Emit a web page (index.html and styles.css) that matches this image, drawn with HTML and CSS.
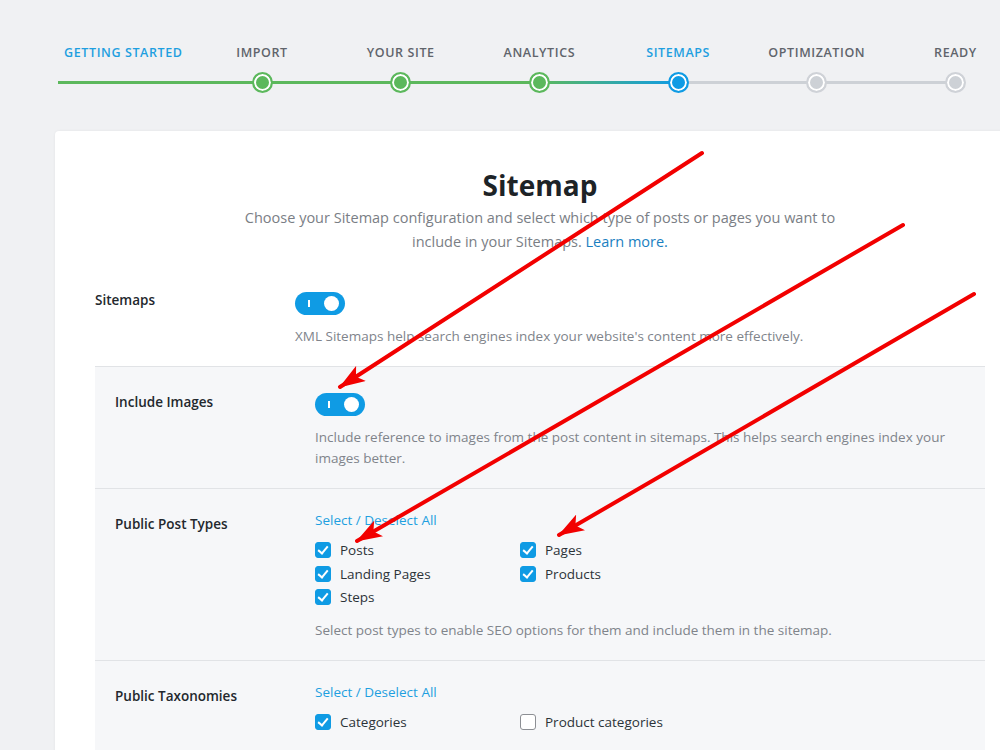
FILE: index.html
```html
<!DOCTYPE html>
<html lang="en">

<head>
  <meta charset="UTF-8">
  <meta name="viewport" content="width=device-width, initial-scale=1.0">
  <title>Setup Wizard - Sitemap</title>
  <link rel="stylesheet" href="styles.css">
</head>

<body>
  <div class="page">
    <ol class="steps">
      <li class="step first">
        <span class="step-label active">Getting Started</span>
        <span class="step-track"></span>
      </li>
      <li class="step done">
        <span class="step-label">Import</span>
        <span class="step-track"><i class="dot"></i></span>
      </li>
      <li class="step done">
        <span class="step-label">Your Site</span>
        <span class="step-track"><i class="dot"></i></span>
      </li>
      <li class="step done blend">
        <span class="step-label">Analytics</span>
        <span class="step-track"><i class="dot"></i></span>
      </li>
      <li class="step current">
        <span class="step-label active">Sitemaps</span>
        <span class="step-track"><i class="dot"></i></span>
      </li>
      <li class="step todo">
        <span class="step-label">Optimization</span>
        <span class="step-track"><i class="dot"></i></span>
      </li>
      <li class="step todo last">
        <span class="step-label">Ready</span>
        <span class="step-track"><i class="dot"></i></span>
      </li>
    </ol>

    <div class="card">
      <h1 class="card-title">Sitemap</h1>
      <p class="intro">Choose your Sitemap configuration and select which type of posts or pages you want to include in your Sitemaps. <a href="javascript:;">Learn more.</a></p>

      <div class="setting">
        <div class="setting-label">Sitemaps</div>
        <div class="setting-body">
          <span class="toggle"></span>
          <p class="desc">XML Sitemaps help search engines index your website's content more effectively.</p>
        </div>
      </div>

      <div class="sub">
        <div class="setting">
          <div class="setting-label">Include Images</div>
          <div class="setting-body">
            <span class="toggle"></span>
            <p class="desc">Include reference to images from the post content in sitemaps. This helps search engines index your images better.</p>
          </div>
        </div>

        <div class="setting">
          <div class="setting-label">Public Post Types</div>
          <div class="setting-body">
            <a class="select-all" href="javascript:;">Select / Deselect All</a>
            <ul class="checks">
              <li><span class="box checked"></span>Posts</li>
              <li><span class="box checked"></span>Pages</li>
              <li><span class="box checked"></span>Landing Pages</li>
              <li><span class="box checked"></span>Products</li>
              <li><span class="box checked"></span>Steps</li>
            </ul>
            <p class="desc">Select post types to enable SEO options for them and include them in the sitemap.</p>
          </div>
        </div>

        <div class="setting">
          <div class="setting-label">Public Taxonomies</div>
          <div class="setting-body">
            <a class="select-all" href="javascript:;">Select / Deselect All</a>
            <ul class="checks">
              <li><span class="box checked"></span>Categories</li>
              <li><span class="box"></span>Product categories</li>
            </ul>
            <p class="desc">Select taxonomies to enable SEO options for them and include them in the sitemap.</p>
          </div>
        </div>
      </div>
    </div>
  </div>

  <!-- annotation arrows drawn over the screenshot -->
  <svg class="arrows" width="1000" height="750" viewBox="0 0 1000 750">
    <defs>
      <marker id="head" viewBox="0 0 26 18" refX="25" refY="9" markerWidth="26" markerHeight="18" orient="auto" markerUnits="userSpaceOnUse">
        <path d="M0 0 L26 9 L0 18 L6 9 Z" fill="#f20000" />
      </marker>
    </defs>
    <line x1="702" y1="153" x2="340" y2="387" stroke="#f20000" stroke-width="4" stroke-linecap="round" marker-end="url(#head)" />
    <line x1="903" y1="225" x2="357" y2="541" stroke="#f20000" stroke-width="4" stroke-linecap="round" marker-end="url(#head)" />
    <line x1="974" y1="294" x2="559" y2="535" stroke="#f20000" stroke-width="4" stroke-linecap="round" marker-end="url(#head)" />
  </svg>
</body>

</html>
```

FILE: styles.css
```css
* {
  padding: 0;
  margin: 0;
  box-sizing: border-box;
  list-style: none;
}

html,
body {
  overflow: hidden;
}

body {
  background-color: #f0f1f3;
  font-family: "Open Sans", "Noto Sans", sans-serif;
  color: #23282d;
  position: relative;
  width: 1000px;
  height: 750px;
}

a {
  text-decoration: none;
}

.page {
  width: 970px;
  margin-left: 55px;
}

/* ---------- steps ---------- */

.steps {
  display: grid;
  grid-template-columns: repeat(7, 138.7px);
  margin-left: -1px;
  padding-top: 44px;
}

.step {
  display: flex;
  flex-direction: column;
  align-items: center;
}

.step-label {
  font-size: 12.5px;
  font-weight: 600;
  letter-spacing: 0.6px;
  text-transform: uppercase;
  color: #60646b;
  line-height: 18px;
  white-space: nowrap;
}

.step-label.active {
  color: #1e9fe0;
}

.step-track {
  position: relative;
  width: 100%;
  height: 22px;
  margin-top: 9px;
  display: flex;
  justify-content: center;
  align-items: center;
}

.step-track::before {
  content: "";
  position: absolute;
  left: 0;
  right: 0;
  top: 10px;
  height: 3px;
  background: #5cb85c;
}

.step.first .step-track::before {
  left: 4px;
}

.step.blend .step-track::before {
  background: linear-gradient(90deg, #5cb85c 50%, #36aaa2 100%);
}

.step.current .step-track::before {
  background: linear-gradient(90deg, #36aaa2 0, #0f9be4 50%, #cdd1d6 50%);
}

.step.todo .step-track::before {
  background: #cdd1d6;
}

.step.last .step-track::before {
  right: 50%;
}

.dot {
  position: relative;
  width: 21px;
  height: 21px;
  border-radius: 50%;
  border: 2px solid #5cb85c;
  background: #5cb85c;
  box-shadow: inset 0 0 0 2px #fff;
}

.step.current .dot {
  border-color: #0f9be4;
  background: #0f9be4;
}

.step.todo .dot {
  border-color: #cfd2d7;
  background: #cdd1d6;
}

/* ---------- card ---------- */

.card {
  margin-top: 38px;
  background: #fff;
  border-radius: 4px;
  box-shadow: 0 0 3px rgba(0, 0, 0, 0.06);
  padding: 36px 40px 40px;
  height: 700px;
}

.card-title {
  text-align: center;
  font-size: 28px;
  font-weight: 700;
  line-height: 36px;
  color: #1d2327;
}

.intro {
  width: 600px;
  margin: 3px auto 0;
  text-align: center;
  font-size: 14.5px;
  line-height: 24px;
  color: #7a7e85;
}

.intro a {
  color: #1a7fc1;
}

.setting {
  display: flex;
  padding-top: 38px;
}

.setting-label {
  width: 200px;
  flex-shrink: 0;
  font-size: 13.5px;
  font-weight: 600;
  color: #23282d;
  line-height: 16px;
}

.setting-body {
  flex: 1;
}

.desc {
  font-size: 13.5px;
  line-height: 21px;
  color: #80848b;
  margin-top: 11px;
}

.toggle {
  display: block;
  position: relative;
  width: 50px;
  height: 23px;
  border-radius: 12px;
  background: #0f9be4;
}

.toggle::before {
  content: "";
  position: absolute;
  left: 13px;
  top: 8px;
  width: 2px;
  height: 7px;
  background: #fff;
}

.toggle::after {
  content: "";
  position: absolute;
  right: 6px;
  top: 4px;
  width: 15px;
  height: 15px;
  border-radius: 50%;
  background: #fff;
}

/* ---------- grey sub settings ---------- */

.sub {
  margin-top: 19px;
  background: #f6f7f9;
}

.sub .setting {
  padding: 26px 20px 19px;
  border-top: 1px solid #e1e3e6;
}

.sub .setting-label {
  padding-top: 1px;
}

.select-all {
  display: block;
  font-size: 13.5px;
  line-height: 20px;
  color: #1e9fe0;
  margin-top: -5px;
}

.checks {
  display: grid;
  grid-template-columns: 205px 205px;
  margin-top: 10px;
  row-gap: 3.5px;
}

.checks li {
  display: flex;
  align-items: center;
  font-size: 13.5px;
  line-height: 20px;
  color: #2c3338;
}

.box {
  width: 16px;
  height: 16px;
  border-radius: 3px;
  border: 1px solid #8c8f94;
  background: #fff;
  margin-right: 9px;
  position: relative;
}

.box.checked {
  border-color: #0f9be4;
  background: #0f9be4;
}

.box.checked::after {
  content: "";
  position: absolute;
  left: 4px;
  top: 1px;
  width: 4px;
  height: 8px;
  border: solid #fff;
  border-width: 0 2.5px 2.5px 0;
  transform: rotate(40deg);
}

.checks + .desc {
  margin-top: 13px;
}

/* ---------- annotations ---------- */

.arrows {
  position: absolute;
  left: 0;
  top: 0;
  pointer-events: none;
}
```
